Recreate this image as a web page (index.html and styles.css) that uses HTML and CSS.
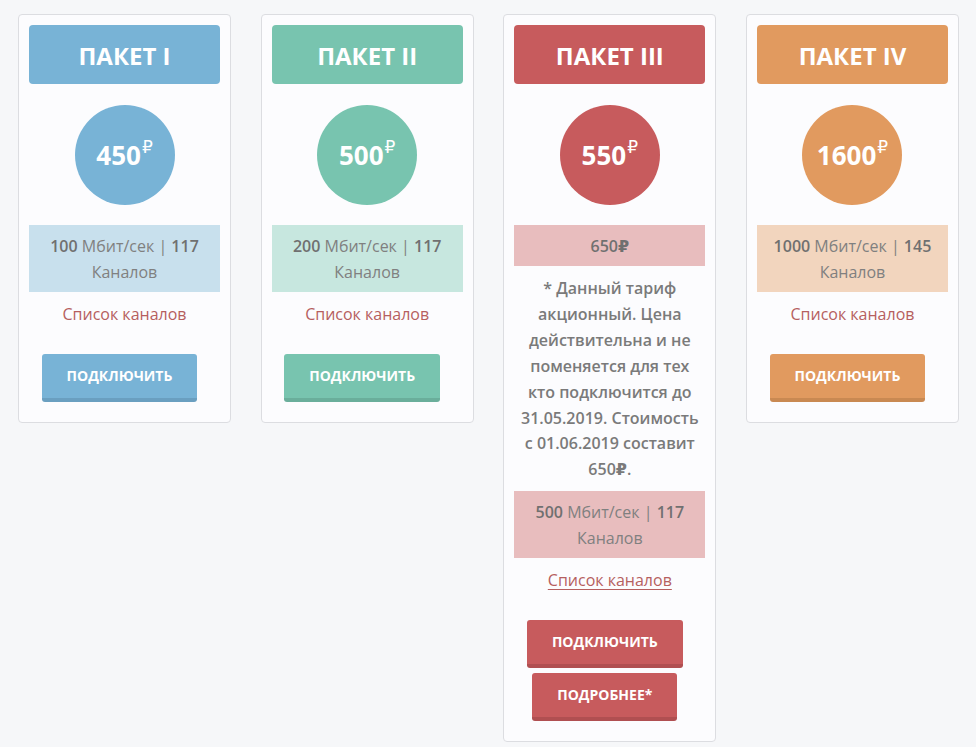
FILE: index.html
```
<!DOCTYPE html>
<html lang="ru">
<head>
<meta charset="utf-8">
<title>Тарифы</title>
<link rel="stylesheet" href="styles.css">
</head>
<body>
<div class="plans">
  <div class="card blue">
    <div class="head">ПАКЕТ I</div>
    <div class="price">450<sup>₽</sup></div>
    <div class="info"><b>100</b> Мбит/сек | <b>117</b> Каналов</div>
    <a class="link" href="#">Список каналов</a>
    <div class="actions"><a class="btn" href="#">Подключить</a></div>
  </div>
  <div class="card green">
    <div class="head">ПАКЕТ II</div>
    <div class="price">500<sup>₽</sup></div>
    <div class="info"><b>200</b> Мбит/сек | <b>117</b> Каналов</div>
    <a class="link" href="#">Список каналов</a>
    <div class="actions"><a class="btn" href="#">Подключить</a></div>
  </div>
  <div class="card red">
    <div class="head">ПАКЕТ III</div>
    <div class="price">550<sup>₽</sup></div>
    <div class="info old"><b>650₽</b></div>
    <p class="note">* Данный тариф акционный. Цена действительна и не поменяется для тех кто подключится до 31.05.2019. Стоимость с 01.06.2019 составит 650₽.</p>
    <div class="info"><b>500</b> Мбит/сек | <b>117</b> Каналов</div>
    <a class="link under" href="#">Список каналов</a>
    <div class="actions"><a class="btn" href="#">Подключить</a><a class="btn" href="#">Подробнее*</a></div>
  </div>
  <div class="card orange">
    <div class="head">ПАКЕТ IV</div>
    <div class="price">1600<sup>₽</sup></div>
    <div class="info"><b>1000</b> Мбит/сек | <b>145</b> Каналов</div>
    <a class="link" href="#">Список каналов</a>
    <div class="actions"><a class="btn" href="#">Подключить</a></div>
  </div>
</div>
</body>
</html>
```
FILE: styles.css
```
html, body {
  margin: 0;
  padding: 0;
}
body {
  background: #f6f7f9;
  font-family: "Open Sans", "DejaVu Sans", sans-serif;
  color: #808080;
}
.plans {
  display: grid;
  grid-template-columns: repeat(4, 213px);
  column-gap: 29.67px;
  align-items: start;
  padding: 14px 0 0 18px;
}
.card {
  box-sizing: border-box;
  width: 213px;
  border: 1px solid #dcdde1;
  border-radius: 4px;
  background: #fcfcfe;
  padding: 10px 10px 20px;
  display: flex;
  flex-direction: column;
  align-items: center;
  text-align: center;
}
.head {
  align-self: stretch;
  height: 59px;
  border-radius: 4px;
  display: flex;
  align-items: center;
  justify-content: center;
  color: #fff;
  font-size: 24px;
  font-weight: 700;
  padding-top: 1px;
  box-sizing: border-box;
}
.price {
  margin-top: 21px;
  width: 100px;
  height: 100px;
  border-radius: 50%;
  display: flex;
  align-items: center;
  justify-content: center;
  color: #fff;
  font-size: 26px;
  font-weight: 700;
  line-height: 1;
}
.price sup {
  font-size: 17px;
  font-weight: 400;
  align-self: flex-start;
  margin-top: 33px;
  margin-left: 1px;
  line-height: 1;
}
.info {
  align-self: stretch;
  margin-top: 20px;
  padding: 8px 10px 7px;
  font-size: 16px;
  line-height: 26px;
}
.info b {
  color: #707070;
  font-weight: 600;
}
.info.old + .note + .info {
  margin-top: 8px;
}
.note {
  margin: 10px 0 0;
  font-size: 16px;
  font-weight: 600;
  line-height: 25.9px;
  color: #7a7a7a;
  padding: 0 4px;
}
.link {
  margin-top: 9px;
  font-size: 16px;
  line-height: 26px;
  color: #b65f5f;
  text-decoration: none;
}
.link.under {
  text-decoration: underline;
  text-underline-offset: 3px;
  text-decoration-thickness: 1px;
}
.actions {
  margin-top: 27px;
  padding-right: 10px;
  display: flex;
  flex-direction: column;
  align-items: center;
  gap: 5px;
}
.btn {
  display: block;
  height: 44px;
  line-height: 44px;
  padding: 0 25px;
  border-radius: 3px;
  border-bottom: 4px solid;
  color: #fff;
  font-size: 14px;
  font-weight: 700;
  text-transform: uppercase;
  text-decoration: none;
}

.blue .head, .blue .price, .blue .btn { background: #78b3d6; }
.blue .btn { border-color: #6a9fc0; }
.blue .info { background: #c8e0ed; }

.green .head, .green .price, .green .btn { background: #78c4af; }
.green .btn { border-color: #6aae9b; }
.green .info { background: #c7e7df; }

.red .head, .red .price, .red .btn { background: #c75b5d; }
.red .btn { border-color: #b04f51; }
.red .info { background: #e8bdbe; }

.orange .head, .orange .price, .orange .btn { background: #e19a5f; }
.orange .btn { border-color: #c98952; }
.orange .info { background: #f2d5be; }
```
